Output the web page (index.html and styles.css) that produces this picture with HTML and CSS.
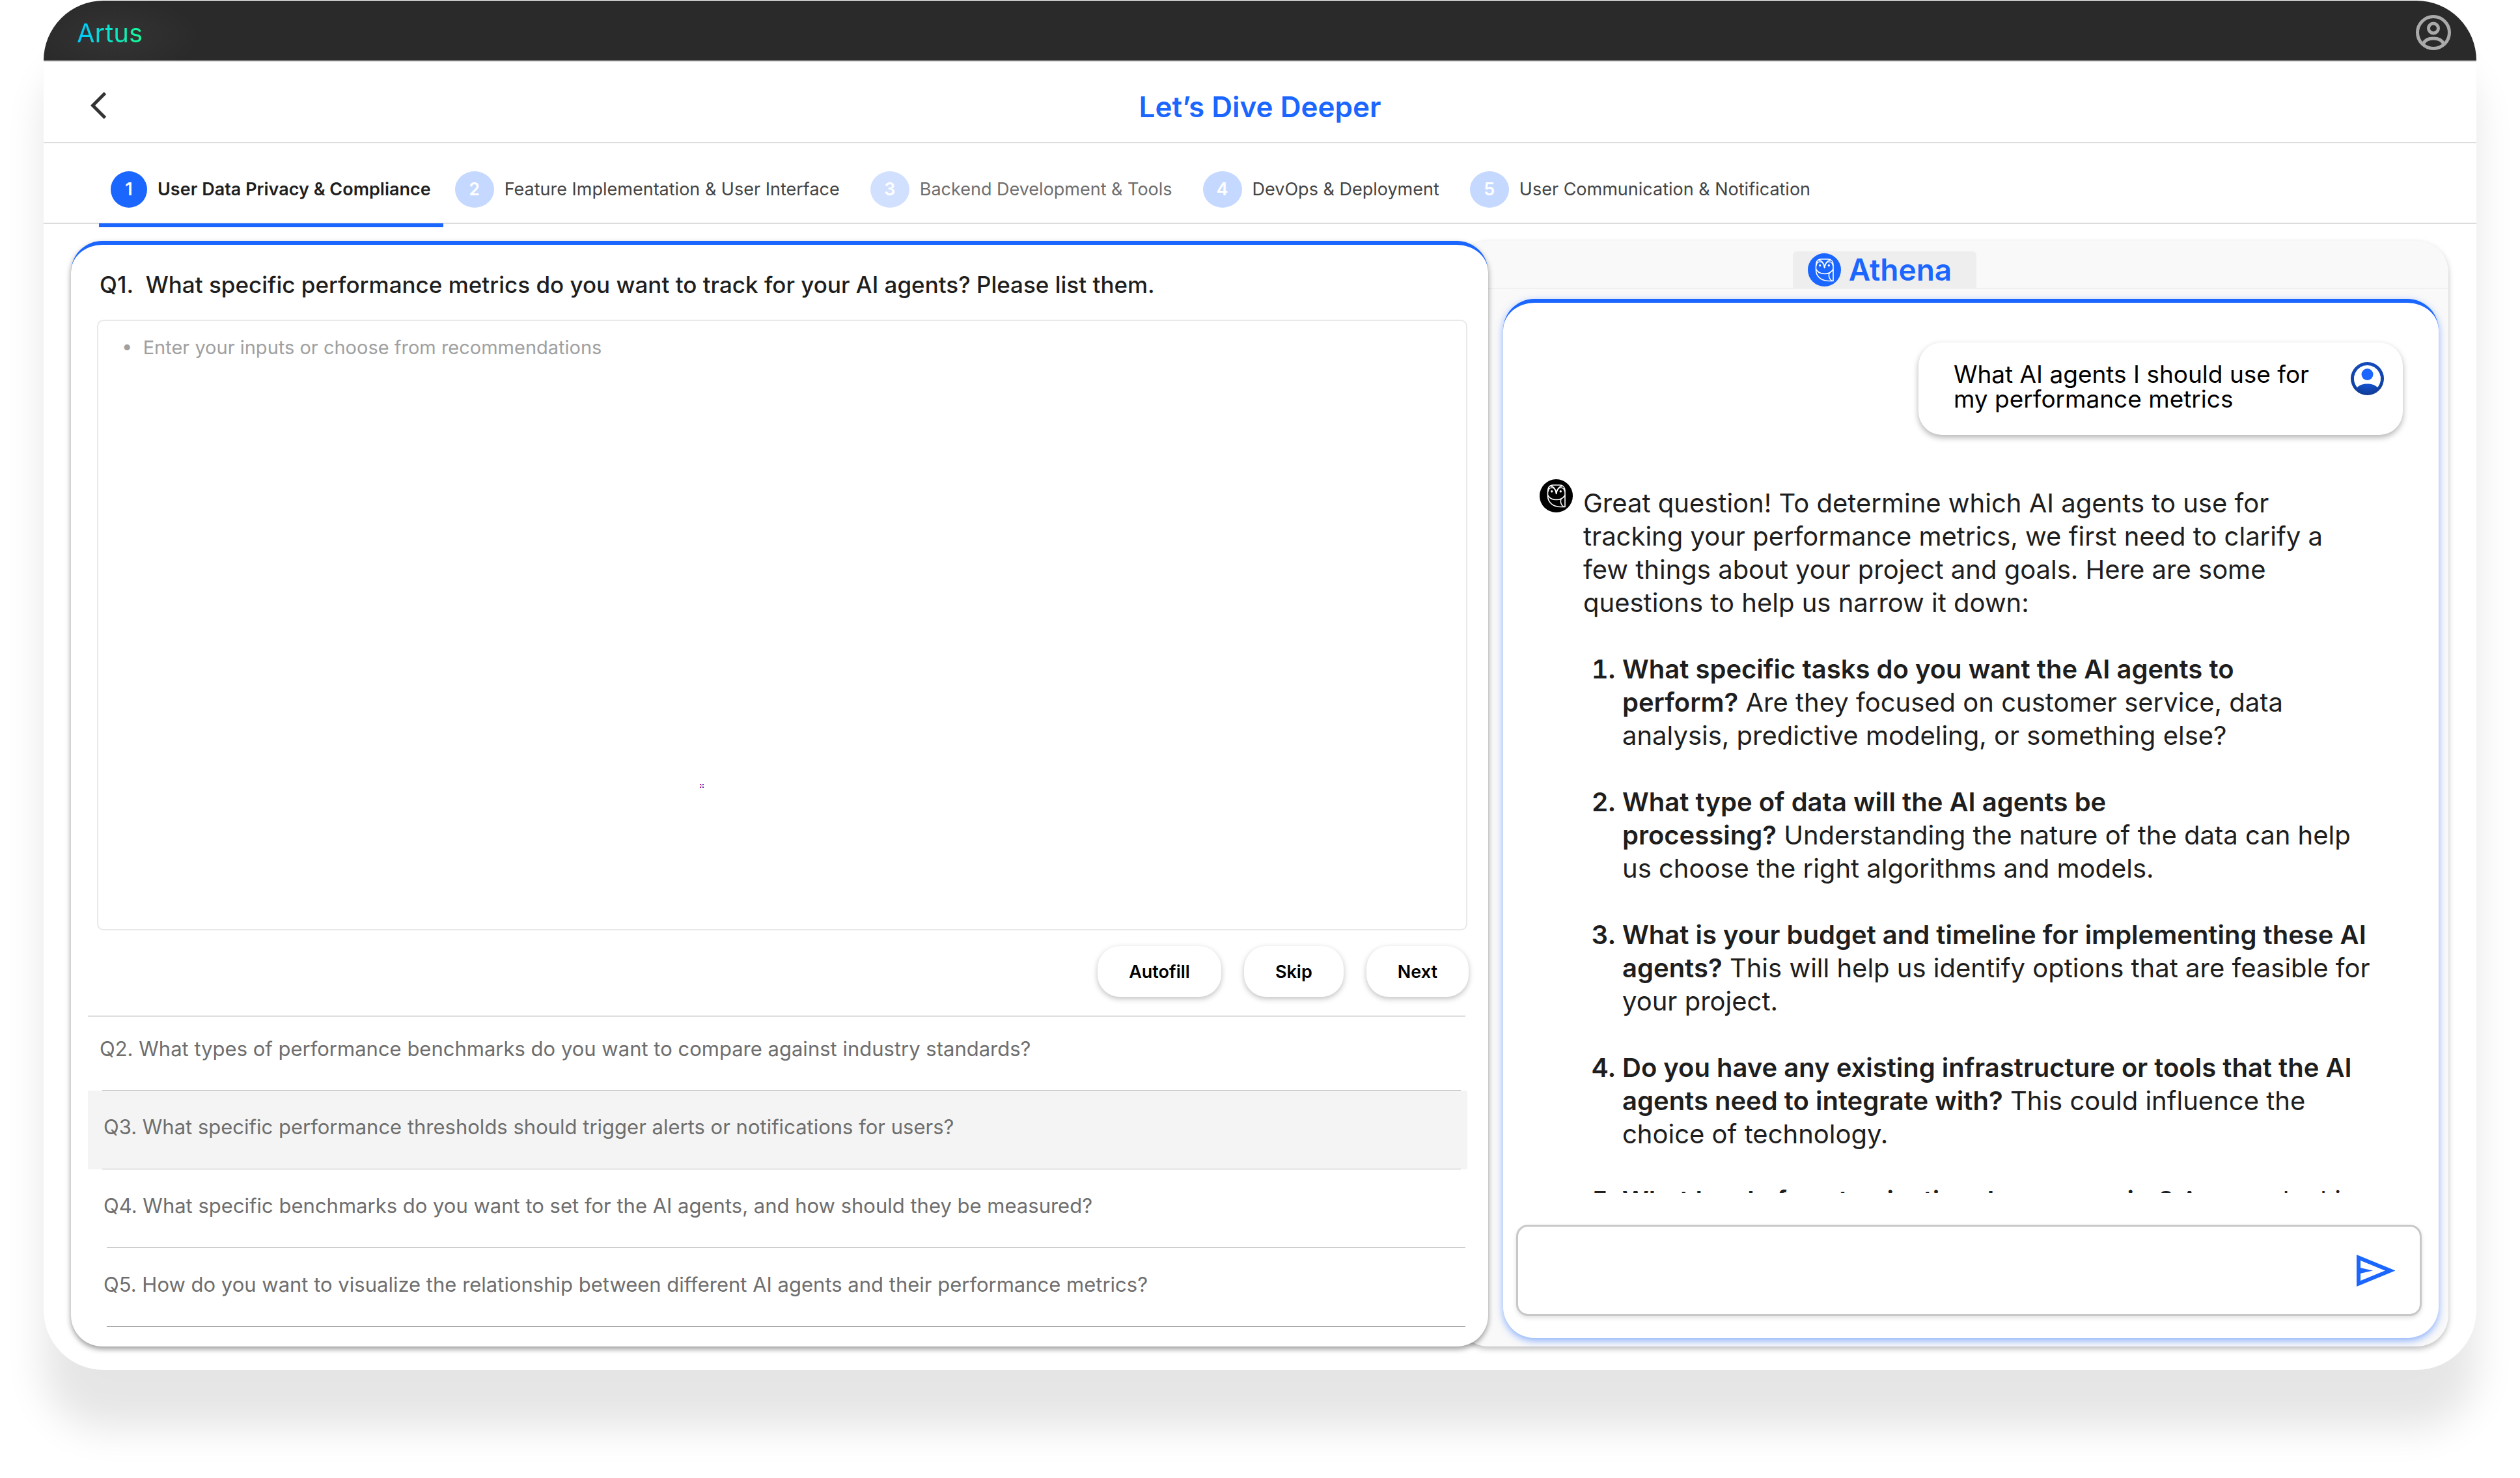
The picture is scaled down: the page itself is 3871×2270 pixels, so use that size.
FILE: index.html
```html
<!DOCTYPE html>
<html lang="en">
<head>
<meta charset="utf-8">
<meta name="viewport" content="width=device-width, initial-scale=1">
<title>Artus – Let’s Dive Deeper</title>
<link rel="stylesheet" href="styles.css">
</head>
<body>
<svg class="sprite" aria-hidden="true">
  <symbol id="owl" viewBox="0 0 51 51">
    <circle cx="25.500" cy="25.500" r="25.500" fill="currentColor"/>
    <g fill="none" stroke="#fff" stroke-width="1.600" stroke-linejoin="round">
      <path d="M12.500 20C12.500 12 16 9 20.500 9H31c4.500 0 8 3 8 9v24.500h-6.500C21 42.500 12.500 36 12.500 25z"/>
      <path d="M12.500 24.500C15 29 20 31.500 25.700 31.500S36.500 29 39 24.500"/>
      <path d="M16.500 10.500C21.500 11 25 15.500 25.700 22.500C26.400 15.500 30 11 35 10.500"/>
      <path d="M13 19C13.500 14.500 16 13 19 13c3.500 0 6 3.500 6.700 9.500M38.500 19C38 14.500 35.500 13 32.500 13c-3.500 0-6 3.500-6.800 9.500"/>
      <path d="M33 30c-1.500 5 0 9.500 4 12.500"/>
    </g>
    <circle cx="18.700" cy="18.700" r="1.700" fill="#fff"/>
    <circle cx="32.300" cy="18.700" r="1.700" fill="#fff"/>
  </symbol>
</svg>

<div class="app">
  <header class="topbar">
    <a class="logo" href="#">Artus</a>
    <button class="account" type="button" aria-label="Account">
      <svg viewBox="0 0 54 54" fill="none" stroke="currentColor" stroke-width="5">
        <circle cx="27" cy="27" r="24.500"/>
        <circle cx="27" cy="20.500" r="7.500"/>
        <path d="M11.500 44C14 38.500 20 36 27 36s13 2.500 15.500 8"/>
      </svg>
    </button>
  </header>

  <div class="titlebar">
    <button class="back" type="button" aria-label="Back">
      <svg viewBox="0 0 26 42" fill="none" stroke="currentColor" stroke-width="5"><path d="M22.500 2L3.500 21l19 19"/></svg>
    </button>
    <h1>Let’s Dive Deeper</h1>
  </div>

  <nav class="steps" aria-label="Steps">
    <button class="step is-active" type="button" aria-current="step"><span class="num">1</span>User Data Privacy &amp; Compliance</button>
    <button class="step" type="button"><span class="num">2</span>Feature Implementation &amp; User Interface</button>
    <button class="step is-muted" type="button"><span class="num">3</span>Backend Development &amp; Tools</button>
    <button class="step" type="button"><span class="num">4</span>DevOps &amp; Deployment</button>
    <button class="step" type="button"><span class="num">5</span>User Communication &amp; Notification</button>
  </nav>

  <main class="workspace">
    <section class="questions">
      <label class="question" for="answer">Q1.&nbsp; What specific performance metrics do you want to track for your AI agents? Please list them.</label>
      <div class="answer-wrap">
        <textarea id="answer" class="answer" placeholder="•  Enter your inputs or choose from recommendations"></textarea>
        <svg class="spark" viewBox="0 0 6 6" aria-hidden="true">
          <path d="M0 0h2v2H0zM0 4h2v2H0z" fill="#c2187a"/>
          <path d="M4 0h2v2H4zM4 4h2v2H4z" fill="#5a2fd0"/>
          <path d="M2 2h2v2H2z" fill="#dcb4ec"/>
        </svg>
      </div>
      <div class="actions">
        <button class="pill" type="button">Autofill</button>
        <button class="pill" type="button">Skip</button>
        <button class="pill" type="button">Next</button>
      </div>
      <ul class="upcoming">
        <li class="is-next"><button type="button">Q2. What types of performance benchmarks do you want to compare against industry standards?</button></li>
        <li class="is-hover"><button type="button">Q3. What specific performance thresholds should trigger alerts or notifications for users?</button></li>
        <li><button type="button">Q4. What specific benchmarks do you want to set for the AI agents, and how should they be measured?</button></li>
        <li><button type="button">Q5. How do you want to visualize the relationship between different AI agents and their performance metrics?</button></li>
      </ul>
    </section>

    <aside class="assistant">
      <div class="assistant-tabs">
        <h2><svg class="owl" aria-hidden="true"><use href="#owl"/></svg>Athena</h2>
      </div>
      <div class="chat">
        <div class="log">
          <div class="bubble">
            <p>What AI agents I should use for<br>my performance metrics</p>
            <svg class="avatar" viewBox="0 0 51 51" aria-hidden="true">
              <defs><radialGradient id="avatar-fill" cx="50%" cy="42%" r="55%"><stop offset="0" stop-color="#1a66ff"/><stop offset="1" stop-color="#103d99"/></radialGradient></defs>
              <path fill="url(#avatar-fill)" fill-rule="evenodd" d="M25.500 0a25.500 25.500 0 1 0 0 51a25.500 25.500 0 0 0 0-51zM25.500 5a20.500 20.500 0 0 1 15.500 34C37 35 32 33.500 25.500 33.500S14 35 10 39A20.500 20.500 0 0 1 25.500 5z"/>
              <circle cx="25.500" cy="19" r="9" fill="#1a66ff"/>
            </svg>
          </div>
          <article class="message">
            <svg class="owl owl-dark" aria-hidden="true"><use href="#owl"/></svg>
            <div class="message-body">
              <p>Great question! To determine which AI agents to use for tracking your performance metrics, we first need to clarify a few things about your project and goals. Here are some questions to help us narrow it down:</p>
              <ol>
                <li><strong>What specific tasks do you want the AI agents to perform?</strong>&nbsp;Are they focused on customer service, data analysis, predictive modeling, or something else?</li>
                <li><strong>What type of data will the AI agents be processing?</strong>&nbsp;Understanding the nature of the data can help us choose the right algorithms and models.</li>
                <li><strong>What is your budget and timeline for implementing these AI agents?</strong>&nbsp;This will help us identify options that are feasible for your project.</li>
                <li><strong>Do you have any existing infrastructure or tools that the AI agents need to integrate with?</strong>&nbsp;This could influence the choice of technology.</li>
                <li><strong>What level of customization do you require?</strong>&nbsp;Are you looking for a ready-made solution?</li>
              </ol>
            </div>
          </article>
        </div>
        <form class="composer">
          <input type="text" aria-label="Message Athena">
          <button class="send" type="submit" aria-label="Send">
            <svg viewBox="0 0 59 49" fill="none" stroke="currentColor" stroke-width="6"><path d="M3 4.500V44.500L51.500 24.500Z"/><path d="M3 19.500L25 24.500L3 29.500Z" fill="currentColor" stroke="none"/></svg>
          </button>
        </form>
      </div>
    </aside>
  </main>
</div>
</body>
</html>
```
FILE: styles.css
```css
*,
*::before,
*::after {
  box-sizing: border-box;
}

:root {
  --blue: #1a66ff;
  --ink: #1e1e1e;
  --line: #dcdcdc;
}

body {
  margin: 0;
  padding: 1px 67px 166px;
  height: 100vh;
  min-height: 1600px;
  background: #fff;
  color: var(--ink);
  font-family: Inter, "Liberation Sans", sans-serif;
  font-size: 27px;
}

h1, h2, p, ol, ul {
  margin: 0;
  padding: 0;
  font-weight: inherit;
}

button, input, textarea {
  font: inherit;
  color: inherit;
}

button {
  border: 0;
  padding: 0;
  background: none;
  cursor: pointer;
}

svg {
  display: block;
}

.sprite {
  position: absolute;
  width: 0;
  height: 0;
}

.app {
  display: flex;
  flex-direction: column;
  height: 100%;
  border-radius: 92px;
  background: #fff;
  box-shadow: 0 90px 60px rgba(0, 0, 0, 0.1);
}

/* Top bar */
.topbar {
  display: flex;
  flex: none;
  align-items: center;
  justify-content: space-between;
  height: 92px;
  padding: 6px 39px 0 51px;
  border-radius: 92px 92px 0 0;
  background: radial-gradient(ellipse 130px 60px at 110px 54px, #343434, #2a2a2a);
  box-shadow: 0 2px 0 #e0e0e0;
}

.logo {
  background: linear-gradient(90deg, #00c8ff, #14ff96);
  background-clip: text;
  color: transparent;
  font-size: 40px;
  text-decoration: none;
}

.account svg {
  width: 54px;
  height: 54px;
  color: #aaa;
}

/* Title bar */
.titlebar {
  display: grid;
  flex: none;
  grid-template-columns: 1fr auto 1fr;
  align-items: center;
  height: 127px;
  padding: 16px 72px 0;
  border-bottom: 2px solid var(--line);
}

.back {
  justify-self: start;
  padding-bottom: 4px;
}

.back svg {
  width: 26px;
  height: 42px;
  color: #333;
}

h1 {
  color: var(--blue);
  font-size: 44px;
  font-weight: 600;
  line-height: 58px;
}

/* Steps */
.steps {
  display: flex;
  flex: none;
  height: 124px;
  padding-left: 85px;
  border-bottom: 2px solid var(--line);
}

.step {
  display: flex;
  gap: 16px;
  align-items: center;
  height: 129px;
  padding: 18px 29px 0 18px;
  border-bottom: 6px solid transparent;
  color: #444;
  white-space: nowrap;
}

.num {
  display: grid;
  place-items: center;
  width: 60px;
  height: 56px;
  border-radius: 50%;
  background: #c5d8ff;
  color: #fff;
  font-weight: 600;
}

.is-active {
  padding-right: 19px;
  border-color: var(--blue);
  color: var(--ink);
  font-weight: 600;
}

.is-active .num {
  width: 56px;
  background: var(--blue);
}

.is-muted {
  color: #6e6e6e;
}

.is-muted .num {
  background: #d2e0ff;
}

/* Workspace */
.workspace {
  display: grid;
  flex: 1;
  grid-template-rows: minmax(0, 1fr);
  grid-template-columns: minmax(0, 2177fr) minmax(0, 1475fr);
  min-height: 0;
  margin: 26px 43px 36px 42px;
}

.questions {
  position: relative;
  display: flex;
  flex-direction: column;
  padding: 39px 30px 30px 26px;
  border-top: 6px solid var(--blue);
  border-radius: 48px;
  background: #fff;
  box-shadow: 0 4px 8px rgba(0, 0, 0, 0.4);
}

.question {
  padding-left: 18px;
  font-size: 35px;
  font-weight: 500;
  line-height: 44px;
}

.answer-wrap {
  position: relative;
  display: flex;
  flex: 1;
  margin: 32px 2px 24px 14px;
}

.answer {
  flex: 1;
  padding: 23px 36px;
  border: 2px solid #e9e9e9;
  border-radius: 10px;
  background: transparent;
  font-size: 29px;
  line-height: 36px;
  resize: none;
}

.answer::placeholder {
  color: #a0a0a0;
  opacity: 1;
}

.spark {
  position: absolute;
  top: 76%;
  left: 44%;
  width: 6px;
  height: 6px;
}

.actions {
  display: flex;
  gap: 35px;
  justify-content: flex-end;
}

.pill {
  height: 78px;
  padding: 0 48px;
  border-radius: 34px;
  background: #fff;
  box-shadow: 0 3px 8px rgba(0, 0, 0, 0.25);
  color: #000;
  font-weight: 600;
}

.upcoming {
  margin: 29px 2px 0 0;
  list-style: none;
}

.upcoming::before,
.upcoming li::after {
  display: block;
  height: 1px;
  background: #999;
  content: "";
}

.upcoming::before {
  margin-right: 3px;
}

.upcoming li::after {
  margin: 0 3px 0 29px;
}

.upcoming .is-next::after,
.upcoming .is-hover::after {
  margin: 0 10px 0 22px;
  background: #bbb;
}

.upcoming button {
  display: block;
  width: 100%;
  height: 120px;
  padding: 0 24px 10px;
  color: #6e6e6e;
  font-size: 31px;
  text-align: left;
}

.upcoming .is-next button {
  height: 113px;
  padding: 0 18px 14px;
}

.is-hover {
  background: #f4f4f4;
}

/* Assistant */
.assistant {
  display: flex;
  flex-direction: column;
  margin-left: -48px;
  padding-bottom: 13px;
  border-radius: 48px;
  background: #f9f9f9;
  box-shadow: 0 4px 8px rgba(0, 0, 0, 0.25);
}

.assistant-tabs {
  display: flex;
  flex: none;
  justify-content: center;
  height: 74px;
  padding: 16px 209px 0 0;
  border-bottom: 2px solid #f0f0f0;
}

.assistant-tabs h2 {
  display: flex;
  gap: 12px;
  align-items: center;
  padding: 0 38px 0 23px;
  border-radius: 6px 6px 0 0;
  background: #eee;
  color: var(--blue);
  font-size: 46px;
  font-weight: 600;
  line-height: 56px;
}

.owl {
  flex: none;
  width: 51px;
  height: 51px;
}

.owl-dark {
  color: #000;
}

.chat {
  display: flex;
  flex: 1;
  flex-direction: column;
  min-height: 0;
  margin: 15px 15px 0 71px;
  padding: 0 26px 34px 20px;
  border-top: 6px solid var(--blue);
  border-radius: 48px;
  background: #fff;
  box-shadow: 0 4px 12px rgba(26, 102, 255, 0.5);
}

.log {
  flex: 1;
  min-height: 0;
  padding: 61px 29px 0 36px;
  overflow: hidden;
}

.bubble {
  display: flex;
  gap: 64px;
  align-items: flex-start;
  width: fit-content;
  margin-left: auto;
  padding: 30px 29px 36px 54px;
  border-radius: 36px;
  background: #fff;
  box-shadow: 0 4px 10px rgba(0, 0, 0, 0.3);
  color: #000;
  font-size: 37px;
  line-height: 38px;
}

.avatar {
  flex: none;
  width: 51px;
  height: 51px;
}

.message {
  display: flex;
  gap: 16px;
  padding: 68px 46px 0 0;
}

.message-body {
  padding-top: 11px;
  font-size: 40px;
  line-height: 51px;
}

.message ol {
  padding-left: 60px;
}

.message li {
  margin-top: 51px;
}

.message li::marker,
.message strong {
  font-weight: 600;
}

.composer {
  display: flex;
  flex: none;
  align-items: center;
  height: 140px;
  margin-top: 49px;
  padding-right: 38px;
  border: 3px solid #c8c8c8;
  border-radius: 18px;
  background: #fff;
  box-shadow: 0 3px 6px rgba(0, 0, 0, 0.12);
}

.composer input {
  flex: 1;
  align-self: stretch;
  min-width: 0;
  padding: 0 40px;
  border: 0;
  background: transparent;
  font-size: 36px;
}

.send svg {
  width: 59px;
  height: 49px;
  color: var(--blue);
}
```
